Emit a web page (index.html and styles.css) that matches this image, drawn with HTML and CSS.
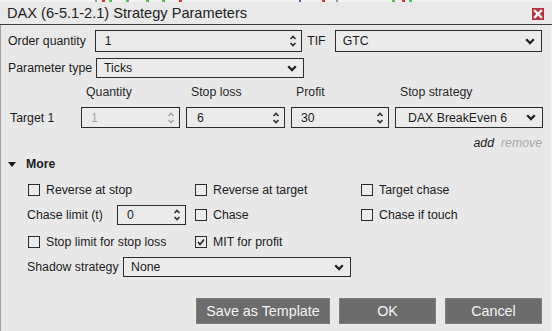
FILE: index.html
```html
<!DOCTYPE html>
<html>
<head>
<meta charset="utf-8">
<link rel="stylesheet" href="styles.css">
</head>
<body>
<div class="topstrip"></div>
<div class="titlebar">
  <span class="title">DAX (6-5.1-2.1) Strategy Parameters</span>
  <span class="close"><svg width="12" height="12" viewBox="0 0 12 12"><path d="M3 3 L9 9 M9 3 L3 9" stroke="#fff" stroke-width="2.4" stroke-linecap="square"/></svg></span>
</div>
<div class="content">
  <div class="row r1">
    <span class="lbl lbl-main">Order quantity</span>
    <div class="field spin w-qty"><span class="val">1</span><svg class="arrows" width="8" height="14" viewBox="0 0 8 14"><polyline points="1.5,5 4,2.5 6.5,5" /><polyline points="1.5,9 4,11.5 6.5,9" /></svg></div>
    <span class="tif">TIF</span>
    <div class="field select w-tif"><span class="val">GTC</span><svg class="chev" width="10" height="7" viewBox="0 0 10 7"><polyline points="1.2,1.2 5,5 8.8,1.2"/></svg></div>
  </div>
  <div class="row r2">
    <span class="lbl lbl-main">Parameter type</span>
    <div class="field select w-ptype"><span class="val">Ticks</span><svg class="chev" width="10" height="7" viewBox="0 0 10 7"><polyline points="1.2,1.2 5,5 8.8,1.2"/></svg></div>
  </div>
  <div class="targets">
    <span></span>
    <span class="hdr">Quantity</span>
    <span class="hdr">Stop loss</span>
    <span class="hdr">Profit</span>
    <span class="hdr">Stop strategy</span>
    <span class="lbl tlabel">Target 1</span>
    <div class="field spin disabled"><span class="val">1</span><svg class="arrows" width="8" height="14" viewBox="0 0 8 14"><polyline points="1.5,5 4,2.5 6.5,5" /><polyline points="1.5,9 4,11.5 6.5,9" /></svg></div>
    <div class="field spin"><span class="val v-sl">6</span><svg class="arrows" width="8" height="14" viewBox="0 0 8 14"><polyline points="1.5,5 4,2.5 6.5,5" /><polyline points="1.5,9 4,11.5 6.5,9" /></svg></div>
    <div class="field spin"><span class="val">30</span><svg class="arrows" width="8" height="14" viewBox="0 0 8 14"><polyline points="1.5,5 4,2.5 6.5,5" /><polyline points="1.5,9 4,11.5 6.5,9" /></svg></div>
    <div class="field select"><span class="val v-strat">DAX BreakEven 6</span><svg class="chev" width="10" height="7" viewBox="0 0 10 7"><polyline points="1.2,1.2 5,5 8.8,1.2"/></svg></div>
  </div>
  <div class="links"><span class="add">add</span><span class="remove">remove</span></div>
  <div class="more"><span class="tri"></span><span class="more-lbl">More</span></div>
  <div class="opts">
    <div class="cell"><label class="cb"><span class="box"></span>Reverse at stop</label></div>
    <div class="cell"><label class="cb"><span class="box"></span>Reverse at target</label></div>
    <div class="cell"><label class="cb"><span class="box"></span>Target chase</label></div>

    <div class="cell chase-row"><span class="lbl chase-lbl">Chase limit (t)</span><div class="field spin w-chase"><span class="val">0</span><svg class="arrows" width="8" height="14" viewBox="0 0 8 14"><polyline points="1.5,5 4,2.5 6.5,5" /><polyline points="1.5,9 4,11.5 6.5,9" /></svg></div></div>
    <div class="cell"><label class="cb"><span class="box"></span>Chase</label></div>
    <div class="cell"><label class="cb"><span class="box"></span>Chase if touch</label></div>

    <div class="cell row-c"><label class="cb"><span class="box"></span>Stop limit for stop loss</label></div>
    <div class="cell row-c"><label class="cb"><span class="box checked"><svg width="10" height="10" viewBox="0 0 10 10"><polyline points="2,5 4,7.5 8,2.5"/></svg></span>MIT for profit</label></div>
    <div class="cell row-c"></div>
  </div>
  <div class="row shadow">
    <span class="lbl shadow-lbl">Shadow strategy</span>
    <div class="field select w-shadow"><span class="val">None</span><svg class="chev" width="10" height="7" viewBox="0 0 10 7"><polyline points="1.2,1.2 5,5 8.8,1.2"/></svg></div>
  </div>
  <div class="buttons">
    <button class="btn btn-save">Save as Template</button>
    <button class="btn btn-ok">OK</button>
    <button class="btn btn-cancel">Cancel</button>
  </div>
</div>
</body>
</html>
```

FILE: styles.css
```css
* { box-sizing: border-box; }
html, body { margin: 0; padding: 0; }
body {
  width: 552px;
  height: 331px;
  overflow: hidden;
  background: #e8e8e8;
  font-family: "Liberation Sans", Arial, sans-serif;
  font-size: 12.3px;
  color: #1c1c1c;
}
.topstrip {
  height: 2px;
  background:
    linear-gradient(to right,
      #f2f2f2 0 95px, #9a9a9a 95px 97px, #f2f2f2 97px 102px, #d33 102px 105px,
      #f2f2f2 105px 109px, #5b5 109px 112px, #f2f2f2 112px 126px, #5b5 126px 129px,
      #f2f2f2 129px 146px, #5b5 146px 149px, #f2f2f2 149px 162px, #5b5 162px 165px,
      #f2f2f2 165px 179px, #d33 179px 182px, #f2f2f2 182px 299px, #56a 299px 301px,
      #f2f2f2 301px 322px, #d33 322px 325px, #f2f2f2 325px 336px, #999 336px 338px,
      #f2f2f2 338px 392px, #5b5 392px 395px, #f2f2f2 395px 402px, #d33 402px 405px,
      #f2f2f2 405px 409px, #5b5 409px 412px, #f2f2f2 412px 100%);
}
.titlebar {
  height: 23px;
  display: flex;
  align-items: center;
  justify-content: space-between;
  padding: 0 8px 0 7px;
  border-bottom: 1px solid #3a3a3a;
  background: #e9e9e9;
}
.title {
  font-size: 14.6px;
  color: #222;
  line-height: 1;
}
.close {
  width: 12px;
  height: 12px;
  background: #b3303c;
  display: flex;
  margin-top: 1px;
}
.content {
  height: 306px;
  border-left: 1px solid #a0a0a0;
  border-right: 1px solid #f3f3f3;
  padding: 5px 9px 0 7px;
}
.row { display: flex; align-items: center; }
.lbl { white-space: nowrap; }
.lbl-main { width: 88px; }
.r1 { height: 22px; }
.r2 { height: 20px; margin-top: 6px; }
.field {
  height: 100%;
  border: 1px solid #2b2b2b;
  background: #ebebeb;
  display: flex;
  align-items: center;
  justify-content: space-between;
  padding: 0 4px 0 9px;
}
.field .val { white-space: nowrap; }
.field.select { padding: 0 6px 0 7px; }
.arrows polyline { fill: none; stroke: #333; stroke-width: 1.7; }
.chev polyline { fill: none; stroke: #222; stroke-width: 2.3; }
.disabled { color: #a8a8a8; }
.disabled .arrows polyline { stroke: #a8a8a8; }
.w-qty { width: 210px; }
.tif { margin: 0 9px 0 5px; }
.w-tif { width: 210px; }
.w-ptype { width: 208px; }

.targets {
  display: grid;
  grid-template-columns: 67px 99px 99px 98px 148px;
  grid-template-rows: 20px 21px;
  column-gap: 6px;
  row-gap: 5px;
  margin-top: 4px;
  align-items: center;
}
.hdr { padding-left: 5px; color: #2a2a2a; }
.tlabel { padding-left: 2px; }
.targets .field { height: 21px; }
.v-sl { padding-left: 1px; }
.targets .select { padding-left: 12px; }

.links {
  height: 16px;
  margin-top: 7px;
  display: flex;
  justify-content: flex-end;
  align-items: center;
  gap: 7px;
  font-style: italic;
}
.add { color: #222; }
.remove { color: #a9a9a9; }

.more {
  height: 16px;
  margin-top: 5px;
  display: flex;
  align-items: center;
}
.tri {
  width: 0; height: 0;
  border-left: 4px solid transparent;
  border-right: 4px solid transparent;
  border-top: 5px solid #1c1c1c;
  margin: 0 10px 0 0;
}
.more-lbl { font-weight: bold; }

.opts {
  display: grid;
  grid-template-columns: 167px 166px 1fr;
  grid-template-rows: 16px 20px 16px;
  row-gap: 7px;
  margin-top: 10px;
  padding-left: 19px;
  align-items: center;
}
.row-c { margin-top: 4px; }
.cb { display: flex; align-items: center; gap: 6px; white-space: nowrap; }
.box {
  width: 12px; height: 12px;
  border: 1px solid #2b2b2b;
  margin-left: 1px;
  background: #ececec;
  display: flex;
}
.box svg polyline { fill: none; stroke: #222; stroke-width: 1.6; }
.cell { height: 100%; display: flex; align-items: center; }
.chase-row { gap: 0; }
.chase-lbl { width: 90px; }
.w-chase { width: 69px; }

.shadow { height: 20px; margin-top: 9px; padding-left: 19px; }
.shadow-lbl { width: 96px; }
.w-shadow { width: 228px; }

.buttons {
  display: flex;
  justify-content: flex-end;
  gap: 9px;
  margin-top: 21px;
}
.btn {
  height: 26px;
  background: #6c6c6c;
  border: 1px solid #7e7e7e;
  color: #f4f4f4;
  font-family: "Liberation Sans", Arial, sans-serif;
  font-size: 14.3px;
  padding: 0;
}
.btn-save { width: 134px; }
.btn-ok { width: 97px; }
.btn-cancel { width: 97px; }
```
